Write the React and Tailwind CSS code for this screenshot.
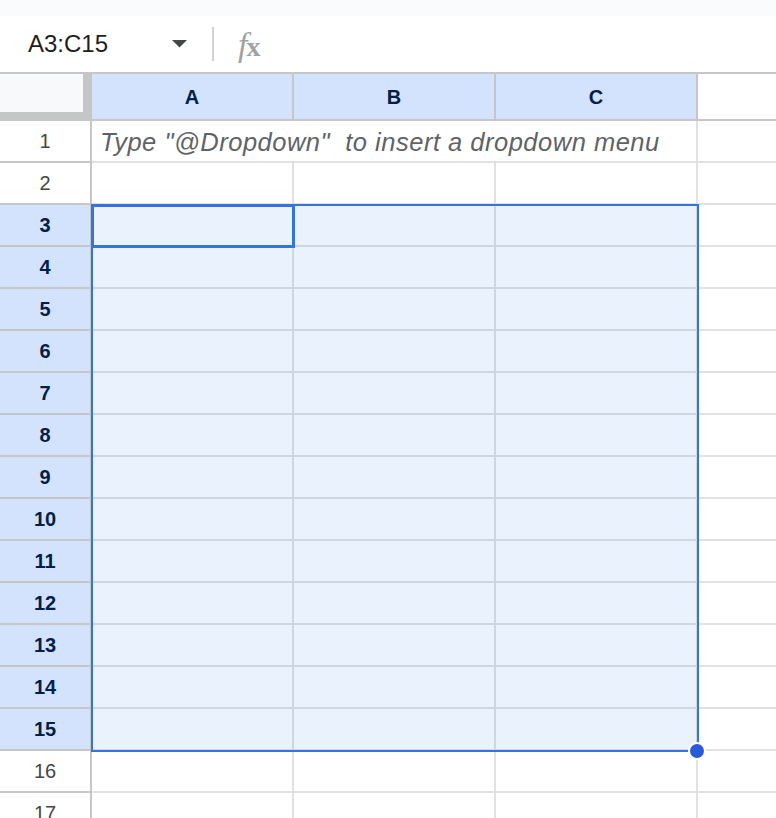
import React from "react";

const COLS = ["A", "B", "C"];
const ROWS = Array.from({ length: 17 }, (_, i) => i + 1);

function RowHeader({ n }) {
  const sel = n >= 3 && n <= 15;
  return (
    <div
      className={
        "w-[92px] shrink-0 h-full border-r-2 border-b-2 border-[#c4c7c5] flex items-center justify-center text-[20px] " +
        (sel ? "bg-[#d3e3fd] font-bold text-[#041e49]" : "bg-white text-[#444746]")
      }
    >
      {n}
    </div>
  );
}

export default function App() {
  return (
    <div className="w-[776px] h-[818px] overflow-hidden bg-white relative [font-family:'Liberation_Sans',Arial,sans-serif]">
      <div className="h-[16px] bg-[#f9fbfd]" />
      <div className="h-[58px] border-b-2 border-[#c4c7c5] flex items-center bg-white">
        <div className="ml-[28px] w-[144px] text-[24px] text-[#1f1f1f] leading-none">A3:C15</div>
        <svg width="15" height="8" viewBox="0 0 15 8" className="shrink-0">
          <polygon points="0,0 15,0 7.5,7.5" fill="#444746" />
        </svg>
        <div className="ml-[25px] w-[2px] h-[34px] bg-[#d3d3d3]" />
        <div className="ml-[24px] flex items-baseline leading-none text-[#a2a2a2] [font-family:'Liberation_Serif',serif] mt-[2px]">
          <span className="italic text-[34px]">f</span>
          <span className="font-bold text-[28px] -ml-[1px]">x</span>
        </div>
      </div>

      <div className="relative">
        <div className="flex h-[47px]">
          <div className="w-[92px] shrink-0 h-full bg-[#c4c7c5]">
            <div className="w-[83px] h-[38px] bg-[#f8f9fa]" />
          </div>
          {COLS.map((c) => (
            <div
              key={c}
              className="w-[202px] shrink-0 h-full border-r-2 border-b-2 border-[#c4c7c5] bg-[#d3e3fd] flex items-center justify-center font-bold text-[20px] text-[#041e49]"
            >
              {c}
            </div>
          ))}
          <div className="flex-1 h-full border-b-2 border-[#c4c7c5] bg-white" />
        </div>

        {ROWS.map((n) => (
          <div key={n} className="flex h-[42px]">
            <RowHeader n={n} />
            {n === 1 ? (
              <div className="w-[606px] shrink-0 h-full border-r-2 border-b-2 border-[#e1e1e1] flex items-center pl-[8px] pt-[3px] italic text-[25.5px] text-[#5f6368] whitespace-pre tracking-[0.5px] overflow-hidden">
                {'Type "@Dropdown"  to insert a dropdown menu'}
              </div>
            ) : (
              COLS.map((c) => (
                <div key={c} className="w-[202px] shrink-0 h-full border-r-2 border-b-2 border-[#e1e1e1]" />
              ))
            )}
            <div className="flex-1 h-full border-b-2 border-[#e1e1e1]" />
          </div>
        ))}

        <div className="absolute left-[91px] top-[130px] w-[608px] h-[548px] border-2 border-[#3574e0] bg-[rgba(14,101,235,0.085)]" />
        <div className="absolute left-[91px] top-[130px] w-[204px] h-[44px] border-[3px] border-[#3574e0]" />
        <div className="absolute left-[688px] top-[668px] w-[18px] h-[18px] rounded-full bg-[#2a5bd7] border-2 border-white" />
      </div>
    </div>
  );
}
